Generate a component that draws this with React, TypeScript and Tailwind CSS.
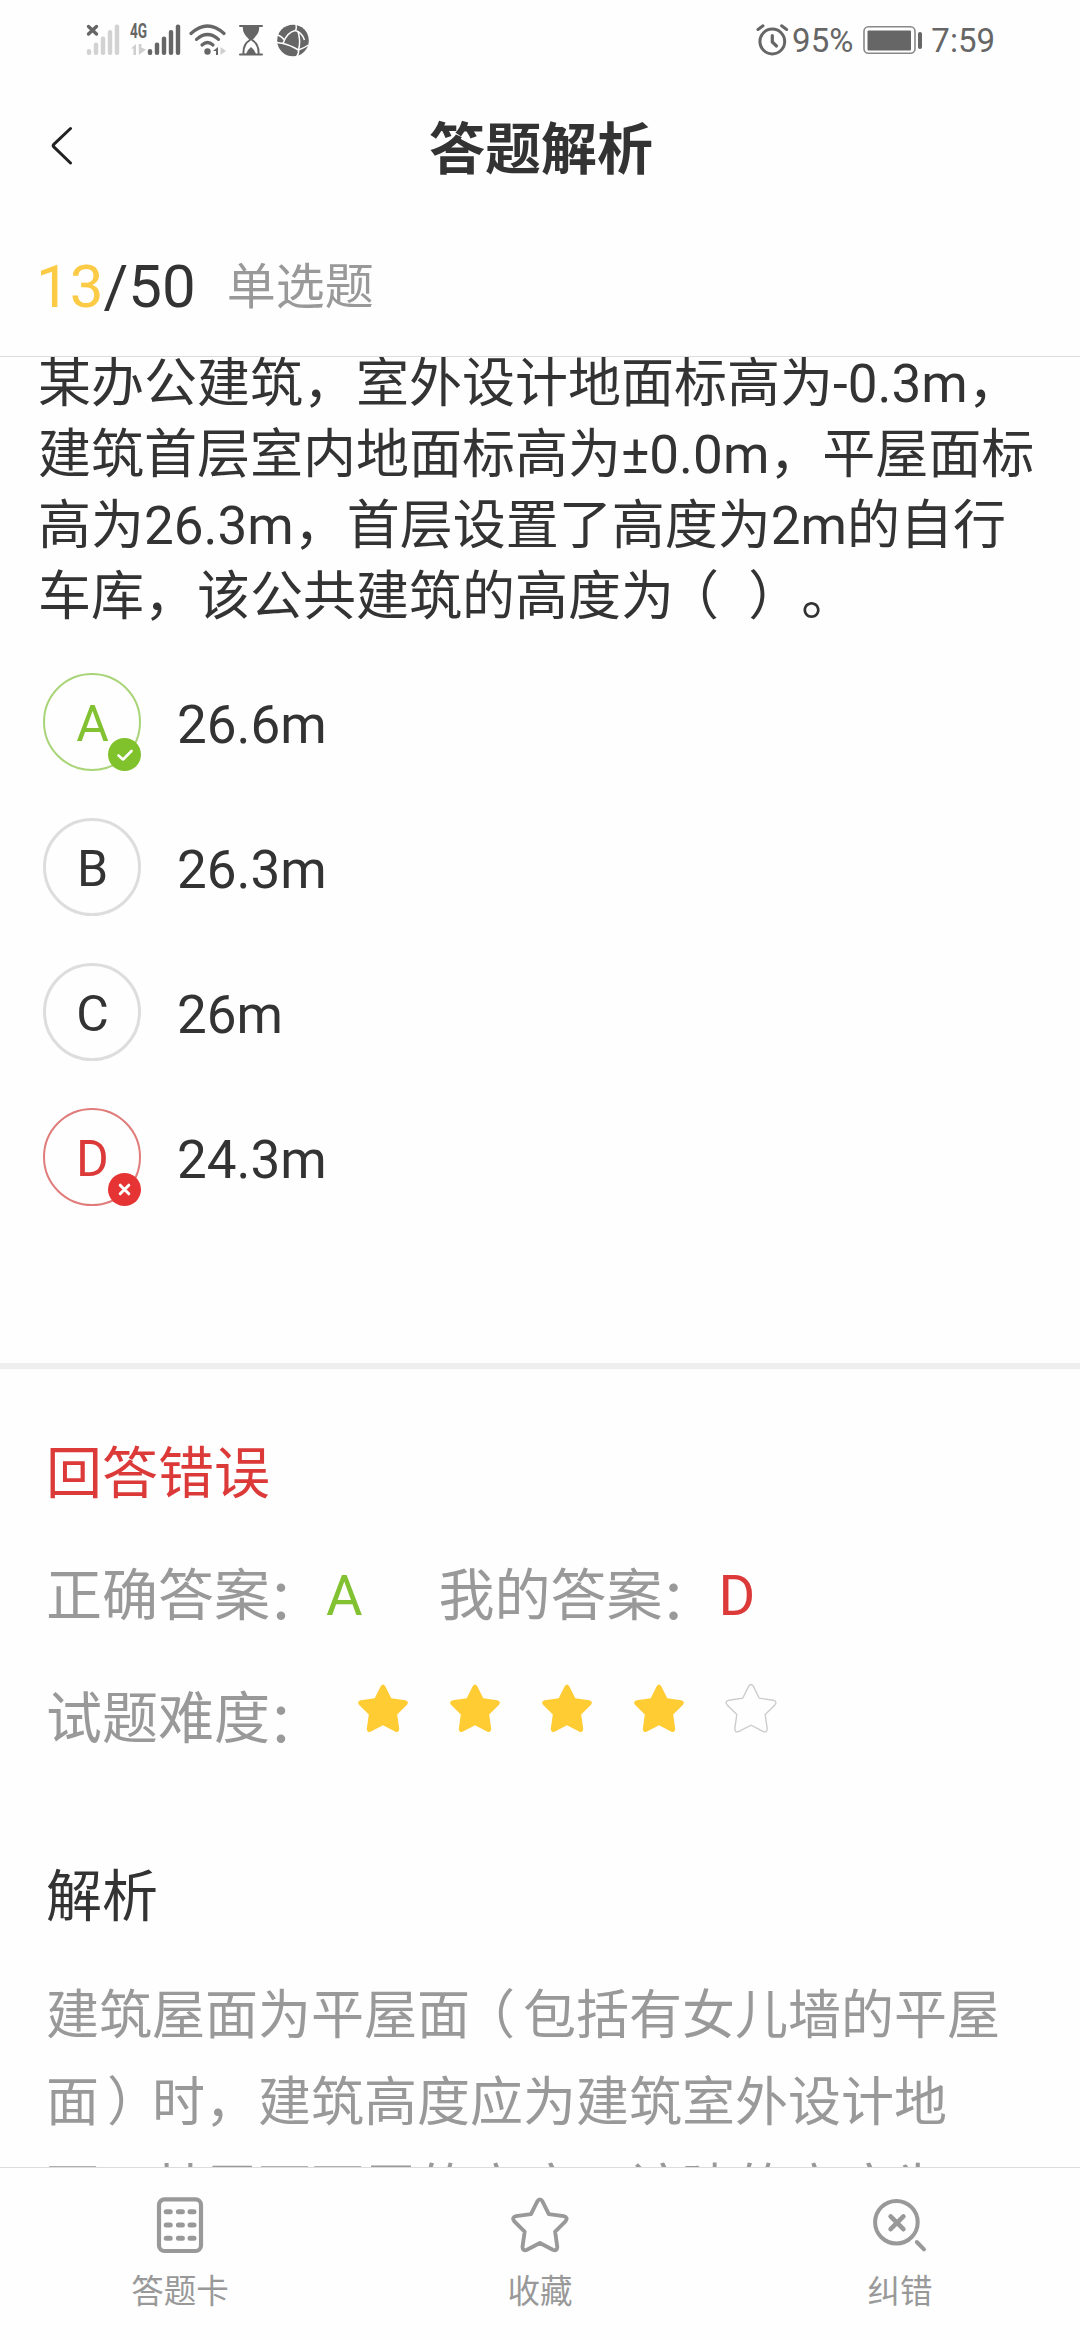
import { ReactNode } from 'react';
import clsx from 'clsx';

type OptionState = 'right' | 'wrong' | 'none';

const options: { key: string; text: string; state: OptionState }[] = [
  { key: 'A', text: '26.6m', state: 'right' },
  { key: 'B', text: '26.3m', state: 'none' },
  { key: 'C', text: '26m', state: 'none' },
  { key: 'D', text: '24.3m', state: 'wrong' },
];

const difficulty = 4;

const starPath =
  'M22.6 2.4 Q25 -1.4 27.4 2.4 L33.3 14.2 L47.2 16.2 Q51.6 17.4 48.8 21 L39.2 30.6 L41.2 44.8 Q41 49.2 37 47.4 L25 41.2 L13 47.4 Q9 49.2 8.8 44.8 L10.8 30.6 L1.2 21 Q-1.6 17.4 2.8 16.2 L16.7 14.2 Z';

const SignalBars = ({ color }: { color: string }) => (
  <g fill={color}>
    <rect x="0" y="24.5" width="4.4" height="6" rx="2.2" />
    <rect x="7" y="18" width="4.4" height="12.5" rx="2" />
    <rect x="14" y="12" width="4.4" height="18.5" rx="2" />
    <rect x="21" y="5.5" width="4.4" height="25" rx="2" />
    <rect x="28" y="0" width="4.4" height="30.5" rx="2" />
  </g>
);

const StatusBar = () => (
  <div className="h-20 shrink-0 relative flex justify-between text-[#666]">
    <div className="flex pt-[24px] pl-[86px]">
      <svg width="34" height="32" viewBox="0 0 34 32">
        <g transform="translate(.8 .6)"><SignalBars color="#d2d2d2" /></g>
        <path d="M2.5 2.5 L10.5 10 M10.5 2.5 L2.5 10" stroke="#666" strokeWidth="3.4" strokeLinecap="round" />
      </svg>
      <div className="relative ml-[10px] w-[51px] h-8">
        <span className="absolute left-0 -top-[1px] text-[19.5px] leading-[18px] font-bold origin-left scale-x-[0.7]">4G</span>
        <svg width="51" height="32" viewBox="0 0 51 32">
          <path d="M1 24.5 L6 20 V31 H3.4 V24.5 Z M8.8 20 H11.4 V23.5 L16 25.5 L8.8 31 Z" fill="#cfcfcf" />
          <g transform="translate(17.8 .6)"><SignalBars color="#666" /></g>
        </svg>
      </div>
      <svg className="ml-[8px]" width="38" height="32" viewBox="0 0 38 32">
        <g fill="none" stroke="#666" strokeWidth="3.2" strokeLinecap="round">
          <path d="M2 9.5 Q18.5 -5.5 35 9.5" />
          <path d="M7.5 15.4 Q18.5 5.6 29.5 15.4" />
          <path d="M13 21 Q18.5 16 24 21" />
        </g>
        <circle cx="18.5" cy="27.5" r="3.2" fill="#666" />
        <path d="M24 27 L29 23 V31 H27 V27 Z" fill="#666" />
        <path d="M31.5 23 L37 27 L31.5 31 Z" fill="#cfcfcf" />
      </svg>
      <svg className="ml-[12px]" width="24" height="32" viewBox="0 0 24 32">
        <path d="M1 2 H23 M1 30.5 H23" stroke="#666" strokeWidth="2" strokeLinecap="round" />
        <path d="M4 2 H20 C21 9 17 12 13 16.5 H11 C7 12 3 9 4 2 Z" fill="#666" />
        <path d="M11 16 C6 19 4 23 4.5 30 M13 16 C18 19 20 23 19.5 30" fill="none" stroke="#666" strokeWidth="2" />
        <path d="M7 30 Q8.5 25.5 12 23 Q15.5 25.5 17 30 Z" fill="#666" />
      </svg>
      <svg className="ml-[13px]" width="34" height="34" viewBox="0 0 34 34">
        <circle cx="17" cy="16.5" r="15.8" fill="#666" />
        <g fill="none" stroke="#fff" strokeWidth="1.5">
          <path d="M20 1 Q21 4 19.5 6.5 Q11 8 7 19.5 M19.5 6.5 Q26 8.5 28.5 16" />
          <path d="M7 19.5 Q14 21 22.5 26 Q25 17 22 7.5" />
          <path d="M1 18.5 L7 19.5 M22.5 26 Q23 30 20.5 33 M22.5 26 Q28 24 32.5 21 M2 11 Q5 12 8.5 16" />
        </g>
      </svg>
    </div>
    <div className="flex items-start pr-[85px] pt-[21px]">
      <svg className="mt-[3px] -ml-px" width="34" height="32" viewBox="0 0 34 32" fill="none" stroke="#666" strokeLinecap="round">
        <circle cx="16.3" cy="17.5" r="12.4" strokeWidth="3" />
        <path d="M16.3 11.5 V18 L20.5 22" strokeWidth="3.2" />
        <path d="M2 5.5 L7 1.8 M25.6 1.8 L30.6 5.5" strokeWidth="3" />
      </svg>
      <span className="ml-[2px] text-[33px] leading-[40px]">95%</span>
      <svg className="ml-[10px] mt-[4px]" width="60" height="30" viewBox="0 0 60 30">
        <rect x="1" y="1.8" width="51" height="26.4" rx="4.5" fill="none" stroke="#888" strokeWidth="1.6" />
        <rect x="4.5" y="5.4" width="43.5" height="20" rx="1" fill="#666" />
        <rect x="55" y="7" width="4" height="17" rx="2" fill="#666" />
      </svg>
      <span className="ml-[8px] text-[33px] leading-[40px]">7:59</span>
    </div>
  </div>
);

const Option = ({ label, text, state }: { label: string; text: string; state: OptionState }) => (
  <li className="flex items-center h-[98px]">
    <div
      className={clsx(
        'relative size-[98px] shrink-0 rounded-full flex items-center justify-center text-[50px] leading-[60px]',
        state === 'none' && 'border-[3px] border-[#ddd] text-[#333]',
        state === 'right' && 'border-2 border-[#a9d477] text-[#82c132]',
        state === 'wrong' && 'border-2 border-[#e07c7a] text-[#db3a39]',
      )}
    >
      <span className="mt-[3px] ml-px">{label}</span>
      {state !== 'none' && (
        <svg className="absolute -right-[2px] -bottom-[2px]" width="33" height="33" viewBox="0 0 33 33" fill="none" strokeLinecap="round" strokeLinejoin="round">
          <circle cx="16.5" cy="16.5" r="16.5" fill={state === 'right' ? '#7fc22b' : '#e63434'} />
          {state === 'right'
            ? <path d="M10.5 17.5 L15 21.5 L23.5 13" stroke="#fff" strokeWidth="2.6" />
            : <path d="M12.2 12.2 L20.8 20.8 M20.8 12.2 L12.2 20.8" stroke="#fff" strokeWidth="3" />}
        </svg>
      )}
    </div>
    <span className="ml-[36px] mt-[6px] text-[53px] leading-[64px]">{text}</span>
  </li>
);

// full-width punctuation sits closer to the middle of its em box
const Open = () => <span className="relative -left-[8px]">（</span>;
const Close = () => <span className="relative left-[8px]">）</span>;
const Colon = () => <span className="relative -left-[3px] top-[4px]">：</span>;

const TabItem = ({ label, children }: { label: string; children: ReactNode }) => (
  <button className="w-[360px] flex flex-col items-center pt-[28px] text-[#999]">
    {children}
    <span className="mt-[18px] text-[32.5px] leading-[40px]">{label}</span>
  </button>
);

const App = () => {
  return (
    <div className="w-[1080px] h-[2340px] flex flex-col overflow-hidden bg-[#fefefe] text-[#333] font-['Roboto','Noto_Sans_CJK_SC',sans-serif] [text-spacing-trim:space-all]">
      <StatusBar />
      <header className="h-[140px] shrink-0 flex items-center px-[51px]">
        <svg className="-mt-[9px]" width="23" height="40" viewBox="0 0 23 40" fill="none" stroke="#222" strokeWidth="3" strokeLinecap="round" strokeLinejoin="round">
          <path d="M19.5 2.5 L2.8 18.3 Q1.6 19.6 2.8 20.9 L19.5 37" />
        </svg>
        <h1 className="flex-1 pr-[21px] text-center text-[56px] leading-[80px] font-bold">答题解析</h1>
      </header>
      <div className="h-[137px] shrink-0 flex items-center border-b border-[#ddd] px-[36px]">
        <p className="-mt-[2px] text-[60px] leading-[80px]"><span className="text-[#fbcb45]">13</span>/50</p>
        <p className="ml-[31px] text-[49px] leading-[80px] text-[#999]">单选题</p>
      </div>

      <main className="flex-1 min-h-0 overflow-hidden">
        <p className="-mt-[8px] pl-[38px] text-[53px] leading-[71px] whitespace-nowrap">
          某办公建筑，室外设计地面标高为-0.3m，<br />
          建筑首层室内地面标高为±0.0m，平屋面标<br />
          高为26.3m，首层设置了高度为2m的自行<br />
          车库，该公共建筑的高度为<Open /> <Close /><span className="ml-[8px]">。</span>
        </p>
        <ul className="mt-[40px] pl-[43px] flex flex-col gap-[47px]">
          {options.map((o) => <Option key={o.key} label={o.key} text={o.text} state={o.state} />)}
        </ul>
        <div className="mt-[157px] h-[6px] bg-[#eee]" />
        <section className="pt-[65px] pl-[46px] text-[56px] leading-[80px] text-[#999] whitespace-nowrap">
          <p className="text-[#db3a39]">回答错误</p>
          <div className="mt-[42px] flex">
            <p>正确答案<Colon /><span className="text-[#82c132]">A</span></p>
            <p className="ml-[76px]">我的答案<Colon /><span className="text-[#db3a39]">D</span></p>
          </div>
          <div className="mt-[43px] flex">
            <p>试题难度<Colon /></p>
            <div className="flex gap-[42px] pt-[5px] ml-[32px]">
              {[1, 2, 3, 4, 5].map((n) => (
                <svg key={n} className="overflow-visible" width="50" height="50" viewBox="0 0 50 50">
                  <path d={starPath} fill={n <= difficulty ? '#ffcc33' : 'none'} stroke={n <= difficulty ? 'none' : '#ccc'} strokeWidth="1.4" />
                </svg>
              ))}
            </div>
          </div>
          <h2 className="mt-[98px] text-[#333]">解析</h2>
          <p className="mt-[36px] text-[53px] leading-[87px]">
            建筑屋面为平屋面<Open />包括有女儿墙的平屋<br />
            面<Close />时，建筑高度应为建筑室外设计地<br />
            面，其屋面面层的高度，该建的高度为
          </p>
        </section>
      </main>

      <footer className="h-[173px] shrink-0 flex items-start border-t border-[#ddd] bg-[#fefefe]">
        <TabItem label="答题卡">
          <svg width="48" height="58" viewBox="0 0 48 58" fill="none" stroke="#999">
            <rect x="3" y="3.4" width="42" height="51.6" rx="5.5" strokeWidth="4.2" />
            <path d="M10.2 15.8 H14.2 M22.4 15.8 H26.4 M34 15.8 H38 M10.2 29 H14.2 M22.4 29 H26.4 M34 29 H38 M10.2 42.3 H14.2 M22.4 42.3 H26.4 M34 42.3 H38" strokeWidth="5" strokeLinecap="round" />
          </svg>
        </TabItem>
        <TabItem label="收藏">
          <svg width="58" height="58" viewBox="-1.9 -2.6 54 54">
            <path d={starPath} fill="none" stroke="#999" strokeWidth="3.6" strokeLinejoin="round" />
          </svg>
        </TabItem>
        <TabItem label="纠错">
          <svg width="58" height="58" viewBox="0 0 58 58" fill="none" stroke="#999" strokeWidth="4" strokeLinecap="round">
            <circle cx="25.4" cy="26.2" r="21.3" />
            <path d="M19.6 20.4 L32.4 33.2 M32.4 20.4 L19.6 33.2" strokeWidth="4.6" />
            <path d="M45.8 46 L53 53.4" />
          </svg>
        </TabItem>
      </footer>
    </div>
  );
};

export default App;
